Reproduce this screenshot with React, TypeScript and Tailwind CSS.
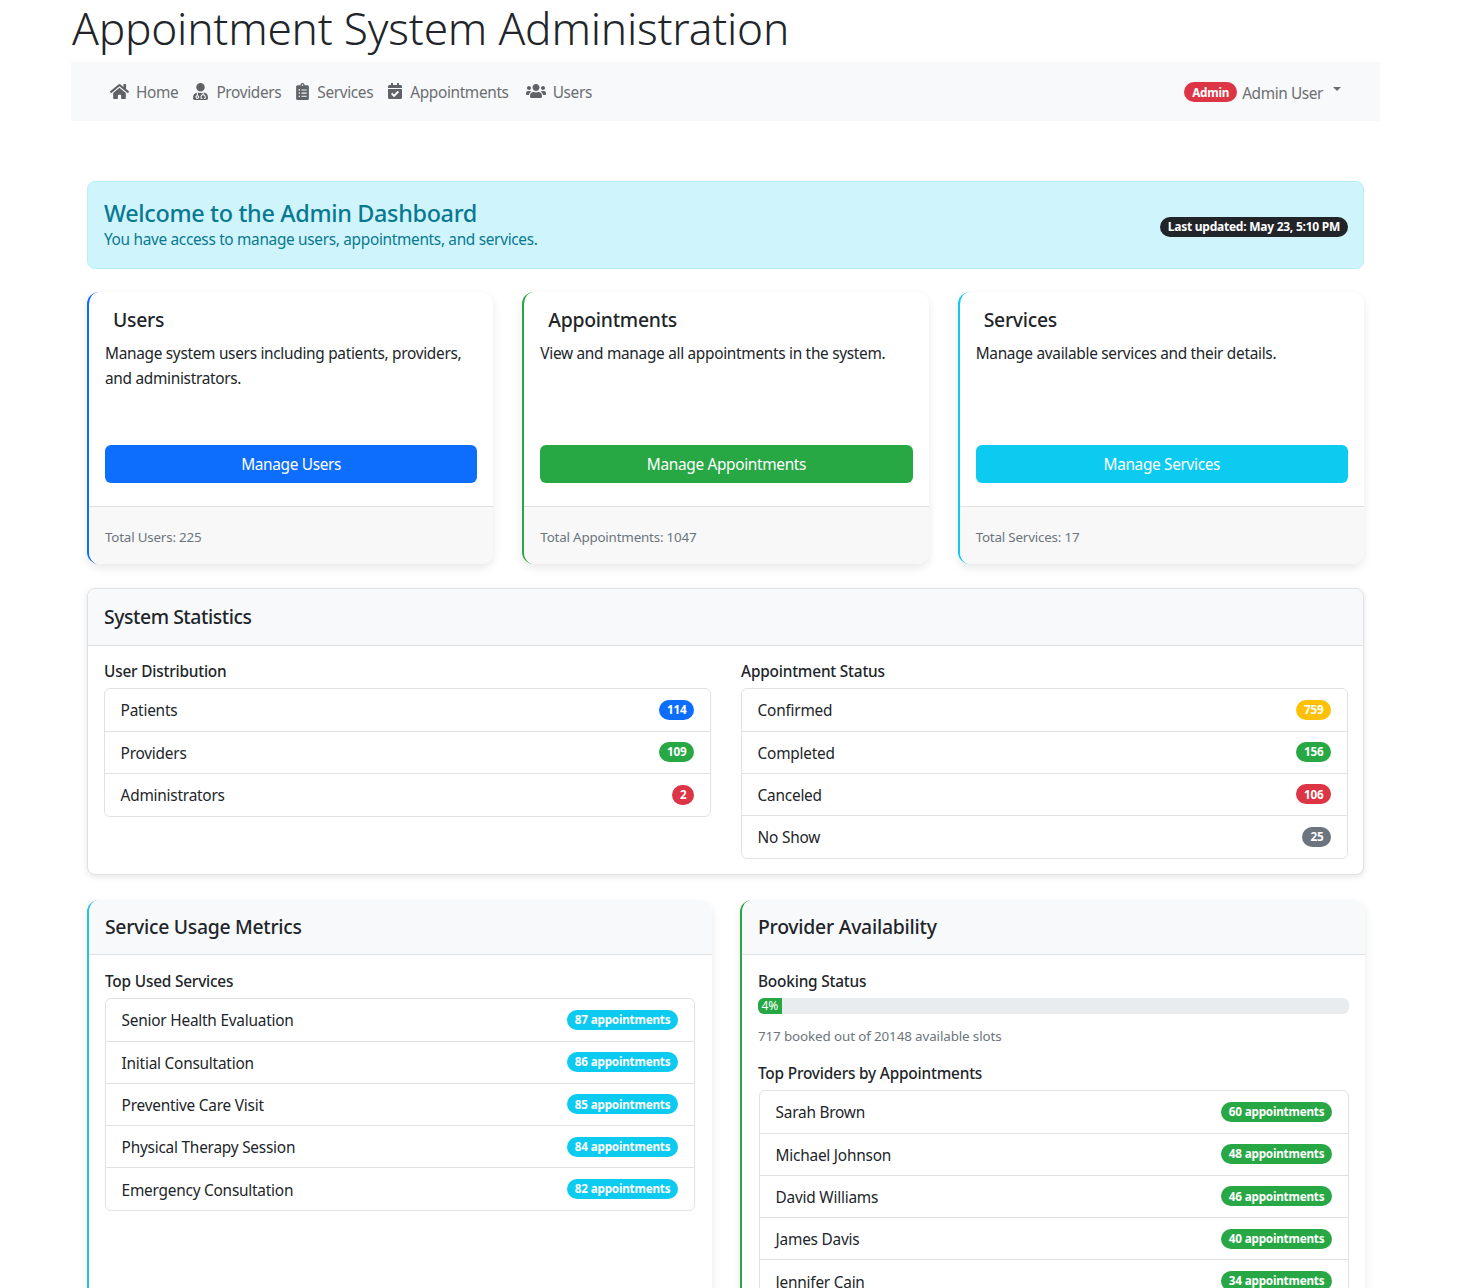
import { FaHome, FaUserMd, FaClipboardList, FaCalendarCheck, FaUsers } from "react-icons/fa";
import type { ReactNode } from "react";

const font = { fontFamily: '"Noto Sans", "Open Sans", sans-serif' };

function NavItem({ icon, label, iconWidth, gap }: { icon: ReactNode; label: string; iconWidth: string; gap: string }) {
  return (
    <a className={`flex items-center ${gap} text-[15.4px] text-[#6b6e71] tracking-[-0.35px]`}>
      <span className={`${iconWidth} flex justify-center text-[#5f6367]`}>{icon}</span>
      <span className="pt-[3px]">{label}</span>
    </a>
  );
}

function Pill({ color, children }: { color: string; children: ReactNode }) {
  return (
    <span className={`${color} inline-flex h-[20px] items-center rounded-full px-[8px] text-[11.7px] font-bold leading-none text-white tracking-[-0.2px]`}>
      {children}
    </span>
  );
}

function Row({ label, badge, color, last }: { label: string; badge: string; color: string; last?: boolean }) {
  return (
    <div className={`flex h-[42.2px] items-center justify-between px-[15.6px] text-[15.4px] text-[#212529] tracking-[-0.23px] ${last ? "" : "border-b border-[#dfe2e5]"}`}>
      <span className="pt-[2px]">{label}</span>
      <Pill color={color}>{badge}</Pill>
    </div>
  );
}

function List({ children }: { children: ReactNode }) {
  return <div className="overflow-hidden rounded-md border border-[#dfe2e5] bg-white">{children}</div>;
}

function ActionCard({ border, btn, title, text, action, foot }: { border: string; btn: string; title: string; text: string; action: string; foot: string }) {
  return (
    <div className={`flex h-[272px] flex-col overflow-hidden rounded-xl border-l-[2px] ${border} bg-white shadow-[0_4px_10px_rgba(0,0,0,0.09)]`}>
      <div className="flex flex-1 flex-col px-4 pt-[14px]">
        <h5 className="pl-2 text-[19.4px] font-medium leading-[28px] text-[#212529] tracking-[-0.27px]">{title}</h5>
        <p className="mt-[7px] h-[98px] text-[15.4px] leading-[25px] text-[#212529] tracking-[-0.3px]">{text}</p>
        <button className={`${btn} mt-[6px] h-[38px] w-full rounded-md pt-[2px] text-[15.4px] text-white tracking-[-0.33px]`}>{action}</button>
      </div>
      <div className="flex h-[58px] items-center border-t border-[#dfe2e5] bg-[#f8f8f8] px-4 pt-[4px] text-[13.4px] text-[#6c757d] tracking-[-0.2px]">{foot}</div>
    </div>
  );
}

function SectionHead({ children }: { children: ReactNode }) {
  return <h6 className="text-[15.4px] font-medium leading-[20px] text-[#212529] tracking-[-0.2px]">{children}</h6>;
}

export default function App() {
  return (
    <div style={font} className="h-[1288px] overflow-hidden bg-white">
      <div className="ml-[71px] w-[1309px]">
        <h1 className="h-[62px] pl-[1px] text-[44.2px] font-light leading-[56px] text-[#212529] tracking-[-0.2px]">Appointment System Administration</h1>
        <nav className="flex h-[59px] items-center justify-between bg-[#f8f9fa] pl-[39px] pr-[39px]">
          <div className="flex items-center gap-[15px]">
            <NavItem icon={<FaHome size={19} />} iconWidth="w-[19px]" gap="gap-[7px]" label="Home" />
            <NavItem icon={<FaUserMd size={17} />} iconWidth="w-[15px]" gap="gap-[8px]" label="Providers" />
            <NavItem icon={<FaClipboardList size={17} />} iconWidth="w-[13px]" gap="gap-[8px]" label="Services" />
            <NavItem icon={<FaCalendarCheck size={16} />} iconWidth="w-[14px]" gap="gap-[8px]" label="Appointments" />
            <span className="ml-[2px] flex">
              <NavItem icon={<FaUsers size={20} />} iconWidth="w-[20px]" gap="gap-[7px]" label="Users" />
            </span>
          </div>
          <div className="flex items-center gap-[5px] text-[15.4px] text-[#6b6e71] tracking-[-0.4px]">
            <span className="mt-[2px] flex">
              <Pill color="bg-[#dc3545]">Admin</Pill>
            </span>
            <span className="pt-[4px]">Admin User</span>
            <span className="mb-[4px] ml-[5px] h-0 w-0 border-x-[4.5px] border-t-[4.5px] border-x-transparent border-t-[#6b6e71]" />
          </div>
        </nav>

        <main className="px-4 pt-[60px]">
          <div className="flex h-[88px] items-center justify-between rounded-lg border border-[#b6effb] bg-[#cff4fc] pl-4 pr-[15px] text-[#087990]">
            <div>
              <h4 className="text-[23.4px] font-medium leading-[28px] tracking-[-0.33px]">Welcome to the Admin Dashboard</h4>
              <p className="pt-[1px] text-[15.4px] leading-[24px] tracking-[-0.32px]">You have access to manage users, appointments, and services.</p>
            </div>
            <span className="mt-[3px] inline-flex h-[20px] items-center rounded-full bg-[#212529] px-[8px] text-[12px] font-bold text-white tracking-[-0.25px]">Last updated: May 23, 5:10 PM</span>
          </div>

          <div className="mt-[23px] grid grid-cols-3 gap-[29px]">
            <ActionCard border="border-[#0d6efd]" btn="bg-[#0d6efd]" title="Users" text="Manage system users including patients, providers, and administrators." action="Manage Users" foot="Total Users: 225" />
            <ActionCard border="border-[#28a745]" btn="bg-[#28a745]" title="Appointments" text="View and manage all appointments in the system." action="Manage Appointments" foot="Total Appointments: 1047" />
            <ActionCard border="border-[#0dcaf0]" btn="bg-[#0dcaf0]" title="Services" text="Manage available services and their details." action="Manage Services" foot="Total Services: 17" />
          </div>

          <section className="mt-[24px] h-[287px] overflow-hidden rounded-lg border border-[#dfe2e5] bg-white shadow-[0_2px_6px_rgba(0,0,0,0.1)]">
            <div className="flex h-[57px] items-center border-b border-[#dfe2e5] bg-[#f8f9fa] px-4">
              <h5 className="text-[19.4px] font-medium text-[#212529] tracking-[-0.45px]">System Statistics</h5>
            </div>
            <div className="grid grid-cols-2 gap-[30px] pl-4 pr-[15px] pt-[16px]">
              <div>
                <SectionHead>User Distribution</SectionHead>
                <div className="mt-[6.4px]">
                  <List>
                    <Row label="Patients" badge="114" color="bg-[#0d6efd]" />
                    <Row label="Providers" badge="109" color="bg-[#28a745]" />
                    <Row label="Administrators" badge="2" color="bg-[#dc3545]" last />
                  </List>
                </div>
              </div>
              <div>
                <SectionHead>Appointment Status</SectionHead>
                <div className="mt-[6.4px]">
                  <List>
                    <Row label="Confirmed" badge="759" color="bg-[#ffc107]" />
                    <Row label="Completed" badge="156" color="bg-[#28a745]" />
                    <Row label="Canceled" badge="106" color="bg-[#dc3545]" />
                    <Row label="No Show" badge="25" color="bg-[#6c757d]" last />
                  </List>
                </div>
              </div>
            </div>
          </section>

          <div className="mt-[25px] grid w-[1278px] grid-cols-2 gap-7">
            <section className="h-[600px] overflow-hidden rounded-xl border-l-[2px] border-[#25c2da] bg-white shadow-[0_4px_10px_rgba(0,0,0,0.09)]">
              <div className="flex h-[55px] items-center border-b border-[#dfe2e5] bg-[#f8f9fa] px-4">
                <h5 className="text-[19.4px] font-medium text-[#212529] tracking-[-0.3px]">Service Usage Metrics</h5>
              </div>
              <div className="pl-4 pr-[17px] pt-[17px]">
                <SectionHead>Top Used Services</SectionHead>
                <div className="mt-[6.4px]">
                  <List>
                    <Row label="Senior Health Evaluation" badge="87 appointments" color="bg-[#0dcaf0]" />
                    <Row label="Initial Consultation" badge="86 appointments" color="bg-[#0dcaf0]" />
                    <Row label="Preventive Care Visit" badge="85 appointments" color="bg-[#0dcaf0]" />
                    <Row label="Physical Therapy Session" badge="84 appointments" color="bg-[#0dcaf0]" />
                    <Row label="Emergency Consultation" badge="82 appointments" color="bg-[#0dcaf0]" last />
                  </List>
                </div>
              </div>
            </section>

            <section className="h-[600px] overflow-hidden rounded-xl border-l-[2px] border-[#28a745] bg-white shadow-[0_4px_10px_rgba(0,0,0,0.09)]">
              <div className="flex h-[55px] items-center border-b border-[#dfe2e5] bg-[#f8f9fa] px-4">
                <h5 className="text-[19.4px] font-medium text-[#212529] tracking-[-0.25px]">Provider Availability</h5>
              </div>
              <div className="px-4 pt-[17px]">
                <SectionHead>Booking Status</SectionHead>
                <div className="mt-[6px] h-[16px] overflow-hidden rounded-md bg-[#e9ecef]">
                  <div className="flex h-full w-[4%] items-center justify-center bg-[#28a745] text-[12px] leading-none text-white">4%</div>
                </div>
                <p className="mt-[12px] text-[13.4px] leading-[20px] text-[#6c757d] tracking-[-0.12px]">717 booked out of 20148 available slots</p>
                <div className="mt-[18px]">
                  <SectionHead>Top Providers by Appointments</SectionHead>
                </div>
                <div className="ml-[1px] mt-[6.4px]">
                  <List>
                    <Row label="Sarah Brown" badge="60 appointments" color="bg-[#28a745]" />
                    <Row label="Michael Johnson" badge="48 appointments" color="bg-[#28a745]" />
                    <Row label="David Williams" badge="46 appointments" color="bg-[#28a745]" />
                    <Row label="James Davis" badge="40 appointments" color="bg-[#28a745]" />
                    <Row label="Jennifer Cain" badge="34 appointments" color="bg-[#28a745]" last />
                  </List>
                </div>
              </div>
            </section>
          </div>
        </main>
      </div>
    </div>
  );
}
